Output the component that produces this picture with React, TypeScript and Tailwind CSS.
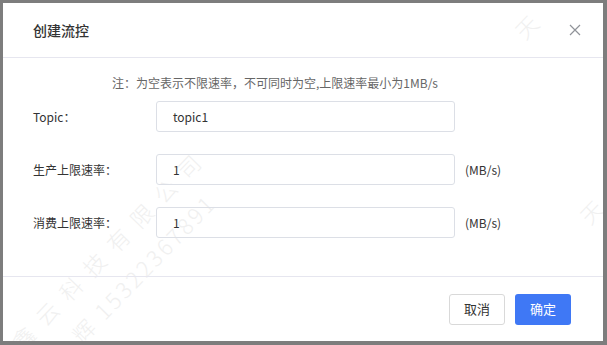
import React from 'react';

const FONT = { fontFamily: '"Noto Sans CJK SC", "Noto Sans", sans-serif' };

const rows = [
  { label: 'Topic：', value: 'topic1', unit: '' },
  { label: '生产上限速率：', value: '1', unit: '(MB/s)' },
  { label: '消费上限速率：', value: '1', unit: '(MB/s)' },
];

const App = () => {
  return (
    <div className="w-[607px] h-[345px] bg-[#7d7d7d] p-[3px] overflow-hidden" style={FONT}>
      <div className="relative w-[600px] h-[338px] bg-white flex flex-col overflow-hidden">
        {/* watermark */}
        <div className="pointer-events-none absolute inset-0 overflow-hidden text-[#f0f0f0] text-[22px] font-light leading-none select-none">
          <div className="absolute left-[12px] top-[331px] -rotate-[46deg] origin-left whitespace-nowrap tracking-[12px]">鑫云科技有限公司</div>
          <div className="absolute left-[72px] top-[324px] -rotate-[46deg] origin-left whitespace-nowrap tracking-[3px]">辉 15322367891</div>
          <div className="absolute left-[515px] top-[20px] -rotate-[46deg] origin-left whitespace-nowrap">天</div>
          <div className="absolute left-[580px] top-[205px] -rotate-[46deg] origin-left whitespace-nowrap">天</div>
        </div>

        <div className="relative flex items-center justify-between h-[55px] pl-[30px] pr-[22px] border-b border-[#e6e6ef]">
          <span className="text-[14px] font-medium text-[#333]">创建流控</span>
          <svg width="12" height="12" viewBox="0 0 12 12" className="text-[#909399]">
            <path d="M1 1 L11 11 M11 1 L1 11" stroke="currentColor" strokeWidth="1.2" fill="none" />
          </svg>
        </div>

        <div className="relative flex-1 px-[30px] pt-[15px]">
          <div className="text-center text-[12px] leading-[20px] text-[#666] pr-[56px]">
            注：为空表示不限速率，不可同时为空,上限速率最小为1MB/s
          </div>
          <div className="mt-[8px] flex flex-col gap-[22px]">
            {rows.map((r) => (
              <div key={r.label} className="flex items-center h-[31px]">
                <span className="w-[123px] text-[12px] text-[#333]">{r.label}</span>
                <div className="w-[299px] h-[31px] border border-[#dcdfe6] rounded-[3px] flex items-center pl-[16px] text-[12px] text-[#333]">
                  {r.value}
                </div>
                {r.unit && <span className="ml-[10px] text-[12px] text-[#333]">{r.unit}</span>}
              </div>
            ))}
          </div>
        </div>

        <div className="relative h-[65px] border-t border-[#e6e6ef] flex items-center justify-end gap-[10px] pr-[32px]">
          <button className="w-[56px] h-[31px] border border-[#d9d9d9] rounded-[3px] bg-white text-[13px] text-[#333]">
            取消
          </button>
          <button className="w-[56px] h-[31px] rounded-[3px] bg-[#3f78f5] text-[13px] text-white">
            确定
          </button>
        </div>
      </div>
    </div>
  );
};

export default App;
